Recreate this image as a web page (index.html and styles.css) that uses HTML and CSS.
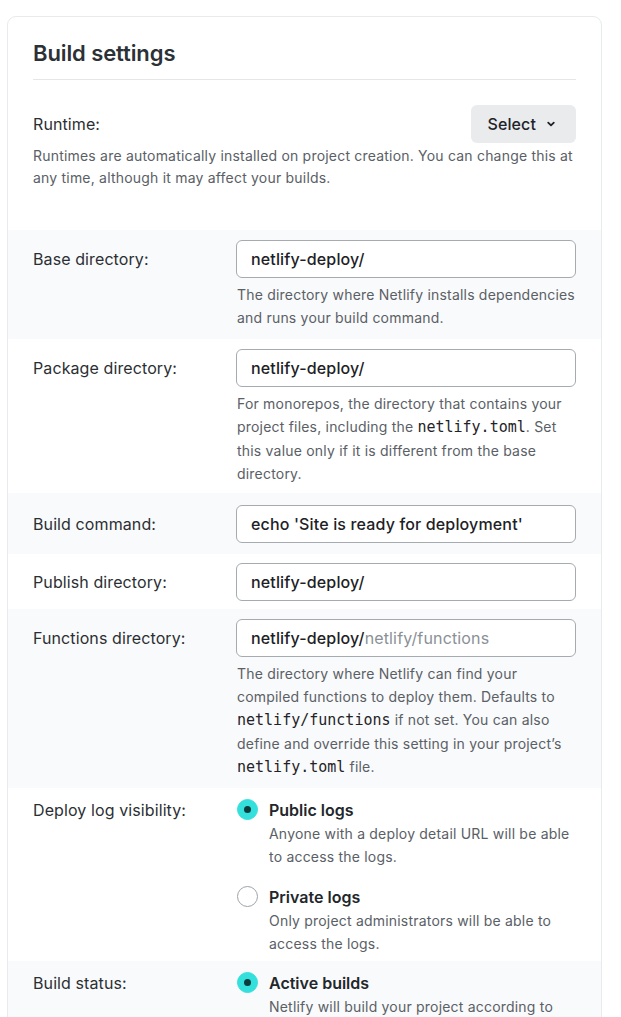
FILE: index.html
```html
<!DOCTYPE html>
<html lang="en">
<head>
<meta charset="utf-8">
<title>Build settings</title>
<link rel="stylesheet" href="styles.css">
</head>
<body>
<section class="card">
  <header class="card-header">
    <h2 class="card-title">Build settings</h2>
  </header>

  <div class="runtime">
    <div class="runtime-top">
      <span class="field-label">Runtime:</span>
      <button class="select-btn" type="button">Select
        <svg class="chev" width="10" height="10" viewBox="0 0 10 10" aria-hidden="true"><path d="M2.2 3.6 L5 6.4 L7.8 3.6" fill="none" stroke="#1f2328" stroke-width="1.8" stroke-linecap="round" stroke-linejoin="round"/></svg>
      </button>
    </div>
    <p class="help help-wide">Runtimes are automatically installed on project creation. You can change this at any time, although it may affect your builds.</p>
  </div>

  <div class="row alt">
    <span class="field-label tall">Base directory:</span>
    <div class="field">
      <div class="input">netlify-deploy/</div>
      <p class="help">The directory where Netlify installs dependencies and runs your build command.</p>
    </div>
  </div>

  <div class="row pkg">
    <span class="field-label tall">Package directory:</span>
    <div class="field">
      <div class="input">netlify-deploy/</div>
      <p class="help">For monorepos, the directory that contains your project files, including the <code>netlify.toml</code>. Set this value only if it is different from the base directory.</p>
    </div>
  </div>

  <div class="row alt cmd">
    <span class="field-label tall">Build command:</span>
    <div class="field">
      <div class="input">echo 'Site is ready for deployment'</div>
    </div>
  </div>

  <div class="row publish">
    <span class="field-label tall">Publish directory:</span>
    <div class="field">
      <div class="input">netlify-deploy/</div>
    </div>
  </div>

  <div class="row alt fns">
    <span class="field-label tall">Functions directory:</span>
    <div class="field">
      <div class="input">netlify-deploy/<span class="placeholder">netlify/functions</span></div>
      <p class="help">The directory where Netlify can find your compiled functions to deploy them. Defaults to <code>netlify/functions</code> if not set. You can also define and override this setting in your project’s <code>netlify.toml</code> file.</p>
    </div>
  </div>

  <div class="row opts">
    <span class="field-label">Deploy log visibility:</span>
    <div class="field options">
      <div class="option">
        <span class="radio checked"></span>
        <div class="option-body">
          <div class="option-title">Public logs</div>
          <p class="help">Anyone with a deploy detail URL will be able to access the logs.</p>
        </div>
      </div>
      <div class="option">
        <span class="radio"></span>
        <div class="option-body">
          <div class="option-title">Private logs</div>
          <p class="help">Only project administrators will be able to access the logs.</p>
        </div>
      </div>
    </div>
  </div>

  <div class="row alt opts">
    <span class="field-label">Build status:</span>
    <div class="field options">
      <div class="option">
        <span class="radio checked"></span>
        <div class="option-body">
          <div class="option-title">Active builds</div>
          <p class="help">Netlify will build your project according to your continuous deployment settings.</p>
        </div>
      </div>
      <div class="option">
        <span class="radio"></span>
        <div class="option-body">
          <div class="option-title">Stopped builds</div>
          <p class="help">Netlify will never build your project. You can build locally via the CLI and then publish new deploys manually.</p>
        </div>
      </div>
    </div>
  </div>
</section>
</body>
</html>
```

FILE: styles.css
```css
* { box-sizing: border-box; }

html, body {
  margin: 0;
  padding: 0;
  background: #ffffff;
}

body {
  font-family: Inter, "Noto Sans", sans-serif;
  color: #2b2f33;
  -webkit-font-smoothing: antialiased;
}

.card {
  margin: 16px 0 0 7px;
  width: 595px;
  border: 1px solid #e8eaec;
  border-radius: 9px;
  background: #ffffff;
  overflow: hidden;
}

.card-header {
  padding: 22px 25px 0;
}

.card-title {
  margin: 0;
  padding-bottom: 12px;
  font-size: 22px;
  line-height: 28px;
  font-weight: 600;
  letter-spacing: -0.1px;
  color: #2b3136;
  border-bottom: 1px solid #e4e6e8;
}

.runtime {
  padding: 25px 25px 41px;
}

.runtime-top {
  display: flex;
  align-items: center;
  justify-content: space-between;
}

.field-label {
  font-size: 16px;
  line-height: 24px;
  letter-spacing: 0.1px;
  color: #2b2f33;
}

.field-label.tall {
  line-height: 38px;
}

.select-btn {
  display: flex;
  align-items: center;
  gap: 10px;
  height: 38px;
  padding: 0 20px 0 17px;
  border: none;
  border-radius: 6px;
  background: #e9ebed;
  font-family: inherit;
  font-size: 16px;
  font-weight: 500;
  letter-spacing: 0.1px;
  color: #1f2328;
}

.chev { display: block; }

.help {
  margin: 0;
  font-size: 14px;
  line-height: 23px;
  letter-spacing: 0.2px;
  color: #5a6066;
}

.help-wide {
  margin-top: 2px;
  line-height: 22px;
}

code {
  font-family: "DejaVu Sans Mono", "Liberation Mono", monospace;
  font-size: 15px;
  letter-spacing: 0;
  color: #1f2328;
}

.row {
  display: grid;
  grid-template-columns: 203px 1fr;
  padding: 10px 25px 10px;
}

.row.pkg {
  padding-bottom: 8px;
}

.row.fns {
  padding-bottom: 9px;
}

.row.cmd {
  padding: 12px 25px 11px;
}

.row.publish {
  padding: 9px 25px 8px;
}

.row.opts {
  padding: 10px 25px 6px;
}

.row.alt {
  background: #f9fafb;
}

.field {
  min-width: 0;
}

.input {
  height: 38px;
  border: 1px solid #a6abb0;
  border-radius: 6px;
  background: #ffffff;
  padding: 0 14px;
  font-size: 16px;
  line-height: 36px;
  font-weight: 500;
  letter-spacing: 0.15px;
  color: #1d2125;
  white-space: nowrap;
  overflow: hidden;
}

.placeholder {
  font-weight: 400;
  color: #8a9096;
}

.field .help {
  margin-top: 5px;
  padding-left: 1px;
}

.options {
  display: flex;
  flex-direction: column;
  gap: 17px;
}

.option {
  display: flex;
  gap: 11px;
  padding-left: 1px;
}

.radio {
  flex: none;
  width: 21px;
  height: 21px;
  margin-top: 1px;
  border-radius: 50%;
  border: 1px solid #9ea3a8;
  background: #ffffff;
  position: relative;
}

.radio.checked {
  border-color: #34e0db;
  background: #34e0db;
}

.radio.checked::after {
  content: "";
  position: absolute;
  left: 50%;
  top: 50%;
  width: 7px;
  height: 7px;
  margin: -3.5px 0 0 -3.5px;
  border-radius: 50%;
  background: #0c3b3c;
}

.option-body .help {
  margin-top: 0;
  padding-left: 0;
}

.option-title {
  font-size: 16px;
  line-height: 24px;
  font-weight: 600;
  color: #22272b;
}
```
